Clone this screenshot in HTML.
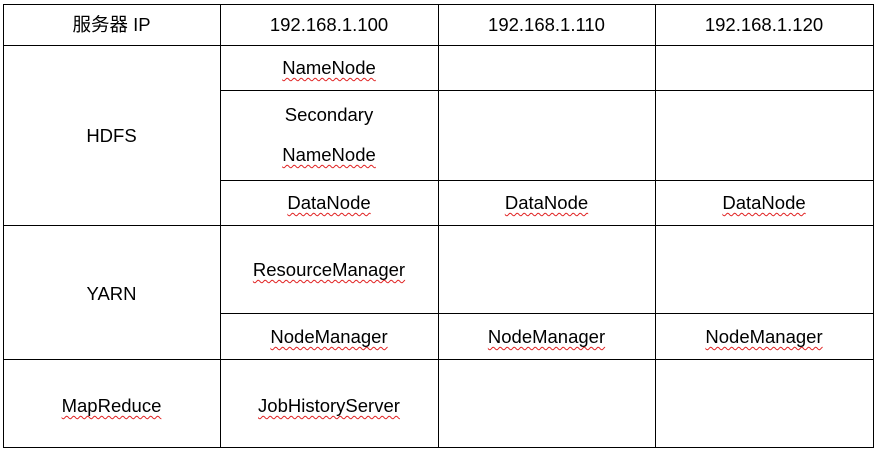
<!DOCTYPE html>
<html><head><meta charset="utf-8"><style>
body{margin:0;width:875px;height:450px;background:#fff;position:relative;overflow:hidden;font-family:"Liberation Sans","Noto Sans CJK SC",sans-serif;font-size:18.5px;color:#000}
.h{position:absolute;height:1px;background:#000}
.v{position:absolute;width:1px;background:#000}
.t{position:absolute;text-align:center;line-height:20px;height:20px;white-space:nowrap}
.s{text-decoration:underline wavy #e02020;text-decoration-thickness:1px;text-underline-offset:3px;text-decoration-skip-ink:none}
</style></head><body>
<div class="h" style="left:3px;width:871px;top:4px"></div>
<div class="h" style="left:3px;width:871px;top:45px"></div>
<div class="h" style="left:220px;width:654px;top:90px"></div>
<div class="h" style="left:220px;width:654px;top:180px"></div>
<div class="h" style="left:3px;width:871px;top:225px"></div>
<div class="h" style="left:220px;width:654px;top:313px"></div>
<div class="h" style="left:3px;width:871px;top:359px"></div>
<div class="h" style="left:3px;width:871px;top:447px"></div>
<div class="v" style="left:3px;top:4px;height:444px"></div>
<div class="v" style="left:220px;top:4px;height:444px"></div>
<div class="v" style="left:438px;top:4px;height:444px"></div>
<div class="v" style="left:655px;top:4px;height:444px"></div>
<div class="v" style="left:873px;top:4px;height:444px"></div>

<div class="t" style="left:3px;width:217px;top:15px">服务器 IP</div>
<div class="t" style="left:220px;width:218px;top:15px">192.168.1.100</div>
<div class="t" style="left:438px;width:217px;top:15px">192.168.1.110</div>
<div class="t" style="left:655px;width:218px;top:15px">192.168.1.120</div>

<div class="t" style="left:3px;width:217px;top:126px">HDFS</div>
<div class="t" style="left:220px;width:218px;top:58px"><span class="s">NameNode</span></div>
<div class="t" style="left:220px;width:218px;top:105px">Secondary</div>
<div class="t" style="left:220px;width:218px;top:145px"><span class="s">NameNode</span></div>
<div class="t" style="left:220px;width:218px;top:193px"><span class="s">DataNode</span></div>
<div class="t" style="left:438px;width:217px;top:193px"><span class="s">DataNode</span></div>
<div class="t" style="left:655px;width:218px;top:193px"><span class="s">DataNode</span></div>

<div class="t" style="left:3px;width:217px;top:284px">YARN</div>
<div class="t" style="left:220px;width:218px;top:260px"><span class="s">ResourceManager</span></div>
<div class="t" style="left:220px;width:218px;top:327px"><span class="s">NodeManager</span></div>
<div class="t" style="left:438px;width:217px;top:327px"><span class="s">NodeManager</span></div>
<div class="t" style="left:655px;width:218px;top:327px"><span class="s">NodeManager</span></div>

<div class="t" style="left:3px;width:217px;top:396px"><span class="s">MapReduce</span></div>
<div class="t" style="left:220px;width:218px;top:396px"><span class="s">JobHistoryServer</span></div>
</body></html>
